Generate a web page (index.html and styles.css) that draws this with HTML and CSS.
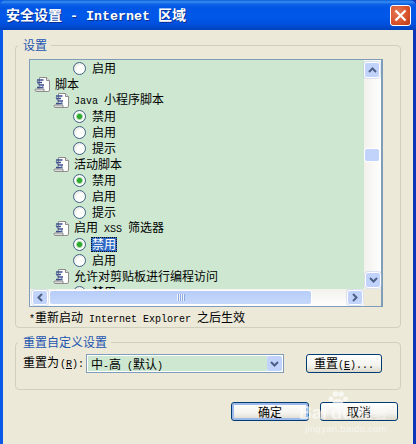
FILE: index.html
```html
<!DOCTYPE html>
<html lang="zh-CN">
<head>
<meta charset="utf-8">
<title>安全设置 - Internet 区域</title>
<link rel="stylesheet" href="styles.css">
</head>
<body>
<svg class="defs" width="0" height="0" aria-hidden="true">
  <symbol id="script" viewBox="0 0 17 17">
    <path d="M5.500 1.500h7l3 3v9.500a1.500 1.500 0 0 1-1.500 1.500h-9z" fill="#fff" stroke="#8d8d8d"/>
    <path d="M12.500 1.500v3h3" fill="#e4e4e4" stroke="#8d8d8d"/>
    <path d="M1.500 13h8.500v2.500h-7a1.500 1.500 0 0 1-1.500-2.500z" fill="#dcdcdc" stroke="#8d8d8d"/>
    <path d="M3 4h6.500M3 6.500h5M5 9h5M3 11.500h6.500" fill="none" stroke="#3b4f8f" stroke-width="1.500"/>
    <path d="M3 5l2 4M9 10l-1 2" fill="none" stroke="#5d6fa8"/>
  </symbol>
</svg>
<div class="window">
  <header class="titlebar">
    <h1 class="title">安全设置<span class="latin"> - Internet </span>区域</h1>
    <button class="close" aria-label="关闭">
      <svg width="13" height="13" viewBox="0 0 13 13"><path d="M1.500 1.500l10 10M11.500 1.500l-10 10" stroke="#fff" stroke-width="2.200" fill="none"/></svg>
    </button>
  </header>
  <main class="body">
    <fieldset class="group settings">
      <legend class="legend">设置</legend>
      <div class="list">
        <div class="tree">
          <div class="row lv2"><span class="radio"></span><span class="label">启用</span></div>
          <div class="row lv0"><svg class="icon"><use href="#script"/></svg><span>脚本</span></div>
          <div class="row lv1"><svg class="icon"><use href="#script"/></svg><span><span class="mono">Java </span>小程序脚本</span></div>
          <div class="row lv2"><span class="radio on"></span><span class="label">禁用</span></div>
          <div class="row lv2"><span class="radio"></span><span class="label">启用</span></div>
          <div class="row lv2"><span class="radio"></span><span class="label">提示</span></div>
          <div class="row lv1"><svg class="icon"><use href="#script"/></svg><span>活动脚本</span></div>
          <div class="row lv2"><span class="radio on"></span><span class="label">禁用</span></div>
          <div class="row lv2"><span class="radio"></span><span class="label">启用</span></div>
          <div class="row lv2"><span class="radio"></span><span class="label">提示</span></div>
          <div class="row lv1"><svg class="icon"><use href="#script"/></svg><span>启用<span class="mono"> XSS </span>筛选器</span></div>
          <div class="row lv2"><span class="radio on"></span><span class="label selected">禁用</span></div>
          <div class="row lv2"><span class="radio"></span><span class="label">启用</span></div>
          <div class="row lv1"><svg class="icon"><use href="#script"/></svg><span>允许对剪贴板进行编程访问</span></div>
          <div class="row lv2"><span class="radio"></span><span class="label">禁用</span></div>
        </div>
        <div class="vscroll">
          <div class="sbtn"><svg width="9" height="6" viewBox="0 0 9 6"><path d="M1 5l3.500-3.500L8 5" fill="none" stroke="#4d6185" stroke-width="2"/></svg></div>
          <div class="vthumb"></div>
          <div class="sbtn end"><svg width="9" height="6" viewBox="0 0 9 6"><path d="M1 1l3.500 3.500L8 1" fill="none" stroke="#4d6185" stroke-width="2"/></svg></div>
        </div>
        <div class="hscroll">
          <div class="sbtn"><svg width="6" height="9" viewBox="0 0 6 9"><path d="M5 1L1.500 4.500 5 8" fill="none" stroke="#4d6185" stroke-width="2"/></svg></div>
          <div class="hthumb"><span class="grip"></span></div>
          <div class="sbtn end"><svg width="6" height="9" viewBox="0 0 6 9"><path d="M1 1l3.500 3.500L1 8" fill="none" stroke="#4d6185" stroke-width="2"/></svg></div>
        </div>
        <div class="corner"></div>
      </div>
      <p class="note"><span class="mono">*</span>重新启动<span class="mono"> Internet Explorer </span>之后生效</p>
    </fieldset>
    <fieldset class="group reset">
      <legend class="legend">重置自定义设置</legend>
      <div class="reset-row">
        <span class="reset-label">重置为<span class="mono">(<u>R</u>):</span></span>
        <div class="select">
          <span class="select-value">中<span class="mono">-</span>高<span class="mono"> (</span>默认<span class="mono">)</span></span>
          <span class="select-btn"><svg width="9" height="6" viewBox="0 0 9 6"><path d="M1 1l3.500 3.500L8 1" fill="none" stroke="#4d6185" stroke-width="2"/></svg></span>
        </div>
        <button class="btn reset-btn">重置<span class="mono">(<u>E</u>)...</span></button>
      </div>
    </fieldset>
    <footer class="actions">
      <button class="btn action default">确定</button>
      <button class="btn action">取消</button>
    </footer>
    <div class="watermark" aria-hidden="true">
      <svg class="wm-paw" width="22" height="17" viewBox="0 0 22 17">
        <circle cx="4" cy="8" r="2.500"/><circle cx="8.500" cy="3" r="2.800"/><circle cx="14" cy="3" r="2.800"/><circle cx="18.500" cy="8" r="2.500"/>
        <ellipse cx="11" cy="12.500" rx="5.500" ry="4.500"/>
      </svg>
      <div class="wm-main"><span>Bai</span><span>du</span><span class="wm-cn">经验</span></div>
      <div class="wm-sub">jingyan.baidu.com</div>
    </div>
  </main>
</div>
</body>
</html>
```
FILE: styles.css
```css
* { box-sizing: border-box; }
html, body { margin: 0; padding: 0; }
body {
  width: 416px;
  height: 444px;
  overflow: hidden;
  font: 12px/16px "Noto Sans CJK SC", "Liberation Sans", sans-serif;
  color: #000;
}
.defs { position: absolute; }
.mono { font-family: "Liberation Mono", monospace; font-size: 10px; white-space: pre; }
.latin { font-family: "Liberation Mono", monospace; font-size: 13.33px; white-space: pre; }

.window {
  display: flex;
  flex-direction: column;
  height: 444px;
  background: linear-gradient(90deg, #0a5ae8 50%, #0a36b8 50%);
}
.titlebar {
  height: 30px;
  flex: none;
  display: flex;
  align-items: center;
  justify-content: space-between;
  padding: 1px 5px 0 6px;
  border-radius: 6px 6px 0 0;
  background: linear-gradient(#0a5fd9 0, #3a8df2 2px, #0d62e6 4px, #0055e5 8px, #0058ea 16px, #0050de 24px, #0042bb 30px);
}
.title {
  margin: 0;
  font-size: 14px;
  line-height: 16px;
  font-weight: 700;
  color: #fff;
  text-shadow: 1px 1px 0 #0b2f8f;
  white-space: pre;
}
.close {
  width: 21px;
  height: 21px;
  padding: 0;
  display: flex;
  align-items: center;
  justify-content: center;
  border: 1px solid #fff;
  border-radius: 3px;
  background: radial-gradient(circle at 35% 35%, #e67a5a, #d6512a 60%, #b8381a);
}

.body {
  position: relative;
  flex: 1;
  display: flex;
  flex-direction: column;
  padding: 7px 12px 0 12px;
  margin: 0 3px;
  background: #ece9d8;
}
.group {
  margin: 0;
  padding: 0;
  min-width: 0;
  border: 1px solid #d0d0bf;
  border-radius: 4px;
}
.legend {
  margin-left: 2px;
  padding: 0 4px 0 5px;
  color: #1c55b0;
  line-height: 16px;
}
.settings { height: 291px; padding-top: 6px; }
.list {
  width: 354px;
  height: 248px;
  margin-left: 13px;
  display: grid;
  grid-template-columns: 1fr 17px;
  grid-template-rows: 1fr 17px;
  border: 1px solid #7f9db9;
  border-right-width: 2px;
  background: #cde7d0;
}
.tree { overflow: hidden; }
.row { height: 16px; display: flex; align-items: center; white-space: pre; }
.lv0 { padding-left: 4px; }
.lv1 { padding-left: 23px; }
.lv2 { padding-left: 43px; }
.icon { width: 17px; height: 17px; margin-right: 4px; flex: none; }
.radio {
  width: 13px;
  height: 13px;
  flex: none;
  margin-right: 5px;
  border: 1px solid #3d6485;
  border-radius: 50%;
  background: radial-gradient(circle at 65% 65%, #fff 40%, #dcd9cf);
}
.radio.on { background: radial-gradient(circle, #2ea82e 0 2px, #a5dba5 3px, #fff 4px, #e4e2d8); }
.label { padding: 0 1px; }
.selected {
  height: 15px;
  line-height: 13px;
  color: #fff;
  background: #316ac5;
  outline: 1px dotted #111;
  outline-offset: -1px;
}

.vscroll {
  display: flex;
  flex-direction: column;
  padding: 2px 0 1px;
  background: linear-gradient(90deg, #f3f1ec, #fefefe);
}
.hscroll {
  display: flex;
  align-items: stretch;
  padding: 1px 1px 1px 2px;
  background: linear-gradient(#f3f1ec, #fefefe);
}
.corner { background: #ece9d8; }
.sbtn {
  width: 16px;
  height: 16px;
  flex: none;
  display: flex;
  align-items: center;
  justify-content: center;
  border: 1px solid #fff;
  border-radius: 3px;
  background: #c1d3fb;
  box-shadow: 0 0 0 1px rgba(170,190,225,.35);
}
.hscroll .sbtn { height: 15px; }
.end { margin-top: auto; margin-left: auto; }
.vthumb {
  width: 16px;
  height: 14px;
  margin-top: 70px;
  border: 1px solid #fff;
  border-radius: 3px;
  background: #c1d3fb;
}
.hthumb {
  width: 263px;
  display: flex;
  align-items: center;
  justify-content: center;
  margin-left: 1px;
  border: 1px solid #fff;
  border-radius: 3px;
  background: linear-gradient(#b7cdf8, #c6d8fb);
}
.grip {
  width: 8px;
  height: 7px;
  background: repeating-linear-gradient(90deg, #eef4fe 0 1px, #8ea9e0 1px 2px);
}
.note { margin: 2px 0 0 13px; line-height: 16px; white-space: pre; }

.reset { height: 56px; margin-top: 6px; padding-top: 4px; }
.reset-row { display: flex; align-items: center; margin-left: 7px; }
.reset-label { width: 63px; white-space: pre; }
.reset-label .mono { margin-left: 1px; }
.select {
  width: 198px;
  height: 19px;
  display: flex;
  justify-content: space-between;
  border: 1px solid #7f9db9;
  padding: 1px;
  background: #fff;
}
.select-value {
  flex: 1;
  padding-left: 3px;
  line-height: 15px;
  background: #cde7d0;
  white-space: pre;
}
.select-btn {
  width: 15px;
  display: flex;
  align-items: center;
  justify-content: center;
  border-radius: 2px;
  background: #c1d3fb;
}
.btn {
  padding: 0;
  font: inherit;
  color: #000;
  border: 1px solid #003c74;
  border-radius: 3px;
  background: linear-gradient(#fff, #f4f3ee 60%, #dcd8ca);
}
.reset-btn { width: 76px; height: 19px; margin-left: 22px; line-height: 15px; }
.actions { display: flex; gap: 11px; justify-content: flex-end; margin: 12px -12px 0 0; padding-right: 15px; }
.action { width: 78px; height: 19px; line-height: 15px; }
.default { box-shadow: inset 0 0 0 2px #9db9ea; }

.watermark {
  position: absolute;
  left: 294px;
  top: 361px;
  width: 98px;
  color: rgba(255,255,255,.6);
  pointer-events: none;
  text-align: center;
}
.wm-paw { display: block; margin: 0 auto -3px 30px; fill: rgba(255,255,255,.65); }
.wm-main {
  display: flex;
  gap: 4px;
  font: 700 18px/17px "Liberation Sans", "Noto Sans CJK SC", sans-serif;
  white-space: nowrap;
  padding-left: 2px;
}
.wm-cn { font-size: 14px; font-weight: 400; margin-left: 2px; }
.wm-sub { font: 9.500px/11px "Liberation Sans", sans-serif; letter-spacing: .3px; margin-top: 1px; white-space: nowrap; }
```
